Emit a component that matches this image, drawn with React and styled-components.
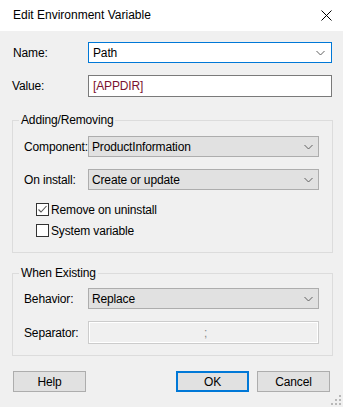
import React from "react";
import styled, { createGlobalStyle } from "styled-components";

const Global = createGlobalStyle`
  html, body { margin: 0; padding: 0; background: #f0f0f0; }
  body {
    font-family: "Liberation Sans", Arial, sans-serif;
    font-size: 12px;
    letter-spacing: -0.15px;
    color: #000;
  }
  * { box-sizing: border-box; }
`;

const Window = styled.div`
  width: 343px;
  height: 407px;
  background: #f0f0f0;
  position: relative;
  overflow: hidden;
`;

const TitleBar = styled.div`
  height: 31px;
  background: #fff;
  display: flex;
  align-items: center;
  justify-content: space-between;
  padding: 0 11px 1px 13px;
`;

const Title = styled.span`
  color: #000;
  letter-spacing: 0;
`;

const CloseBtn = styled.div`
  width: 12px;
  height: 12px;
  display: flex;
  align-items: center;
  justify-content: center;
`;

const Body = styled.div`
  padding: 11px 11px 0 12px;
  display: flex;
  flex-direction: column;
`;

const Row = styled.div`
  display: flex;
  align-items: center;
  height: ${(p) => p.$h || 21}px;
  margin-top: ${(p) => p.$mt || 0}px;
`;

const Label = styled.label`
  width: ${(p) => p.$w}px;
  padding-left: ${(p) => p.$pl || 0}px;
  flex: none;
  white-space: nowrap;
`;

const Combo = styled.div`
  flex: 1;
  height: 100%;
  display: flex;
  align-items: center;
  justify-content: space-between;
  padding: 0 ${(p) => (p.$editable ? 6 : 5)}px 0 ${(p) => (p.$editable ? 4 : 3)}px;
  background: ${(p) => (p.$editable ? "#fff" : "#e1e1e1")};
  border: 1px solid ${(p) => (p.$focused ? "#0078d7" : "#adadad")};
`;

const TextBox = styled.div`
  flex: 1;
  height: 100%;
  display: flex;
  align-items: center;
  justify-content: ${(p) => (p.$disabled ? "center" : "flex-start")};
  padding-left: 4px;
  background: ${(p) => (p.$disabled ? "#f0f0f0" : "#fff")};
  border: 1px solid ${(p) => (p.$disabled ? "#cccccc" : "#7a7a7a")};
  box-shadow: ${(p) => (p.$disabled ? "inset 0 0 0 1px #fff" : "none")};
  color: ${(p) => p.$color || "#000"};
`;

const Group = styled.div`
  position: relative;
  border: 1px solid #dcdcdc;
  margin-top: ${(p) => p.$mt}px;
  margin-right: -1px;
  padding: ${(p) => p.$pt}px 13px ${(p) => p.$pb}px 11px;
  display: flex;
  flex-direction: column;
`;

const Legend = styled.span`
  position: absolute;
  top: -8px;
  left: 6px;
  padding: 0 2px;
  background: #f0f0f0;
  line-height: 15px;
`;

const CheckRow = styled.div`
  display: flex;
  align-items: center;
  height: 13px;
  margin-top: ${(p) => p.$mt}px;
  padding-left: 12px;
  gap: 2px;
`;

const Box = styled.span`
  width: 13px;
  height: 13px;
  border: 1px solid #333;
  background: #fff;
  display: flex;
  align-items: center;
  justify-content: center;
  flex: none;
`;

const Buttons = styled.div`
  display: flex;
  align-items: center;
  margin-top: 15px;
  height: 21px;
  padding-left: 1px;
`;

const Button = styled.div`
  width: 73px;
  height: 21px;
  display: flex;
  align-items: center;
  justify-content: center;
  background: #e1e1e1;
  border: ${(p) => (p.$default ? "2px solid #0078d7" : "1px solid #adadad")};
  margin-left: ${(p) => p.$ml || 0}px;
`;

const Grip = styled.svg`
  position: absolute;
  right: 2px;
  bottom: 2px;
`;

const Chevron = () => (
  <svg width="9" height="6" viewBox="0 0 9 6">
    <path d="M0.5 1 L4.5 5 L8.5 1" fill="none" stroke="#606060" strokeWidth="1" />
  </svg>
);

const Check = () => (
  <svg width="11" height="11" viewBox="0 0 11 11">
    <path d="M1.5 5.5 L4 8 L9.5 2" fill="none" stroke="#555" strokeWidth="1.1" />
  </svg>
);

export default function App() {
  return (
    <Window>
      <Global />
      <TitleBar>
        <Title>Edit Environment Variable</Title>
        <CloseBtn>
          <svg width="11" height="11" viewBox="0 0 11 11">
            <path d="M0.5 0.5 L10.5 10.5 M10.5 0.5 L0.5 10.5" stroke="#000" strokeWidth="1" />
          </svg>
        </CloseBtn>
      </TitleBar>
      <Body>
        <Row $h={21}>
          <Label $w={76} $pl={1}>Name:</Label>
          <Combo $editable $focused>
            <span>Path</span>
            <Chevron />
          </Combo>
        </Row>
        <Row $h={22} $mt={12}>
          <Label $w={76}>Value:</Label>
          <TextBox $color="#7a1230">[APPDIR]</TextBox>
        </Row>

        <Group $mt={23} $pt={15} $pb={15}>
          <Legend>Adding/Removing</Legend>
          <Row $h={21}>
            <Label $w={64}>Component:</Label>
            <Combo>
              <span>ProductInformation</span>
              <Chevron />
            </Combo>
          </Row>
          <Row $h={21} $mt={12}>
            <Label $w={64}>On install:</Label>
            <Combo>
              <span>Create or update</span>
              <Chevron />
            </Combo>
          </Row>
          <CheckRow $mt={13}>
            <Box><Check /></Box>
            <span>Remove on uninstall</span>
          </CheckRow>
          <CheckRow $mt={8}>
            <Box />
            <span>System variable</span>
          </CheckRow>
        </Group>

        <Group $mt={20} $pt={14} $pb={11}>
          <Legend>When Existing</Legend>
          <Row $h={21}>
            <Label $w={64}>Behavior:</Label>
            <Combo>
              <span>Replace</span>
              <Chevron />
            </Combo>
          </Row>
          <Row $h={23} $mt={12}>
            <Label $w={64}>Separator:</Label>
            <TextBox $disabled $color="#8a8a8a">;</TextBox>
          </Row>
        </Group>

        <Buttons>
          <Button>Help</Button>
          <Button $default $ml={90}>OK</Button>
          <Button $ml={8}>Cancel</Button>
        </Buttons>
      </Body>
      <Grip width="10" height="10" viewBox="0 0 10 10">
        <g fill="#b8b8b8">
          <rect x="8" y="0" width="2" height="2" />
          <rect x="4" y="4" width="2" height="2" />
          <rect x="8" y="4" width="2" height="2" />
          <rect x="0" y="8" width="2" height="2" />
          <rect x="4" y="8" width="2" height="2" />
          <rect x="8" y="8" width="2" height="2" />
        </g>
      </Grip>
    </Window>
  );
}
